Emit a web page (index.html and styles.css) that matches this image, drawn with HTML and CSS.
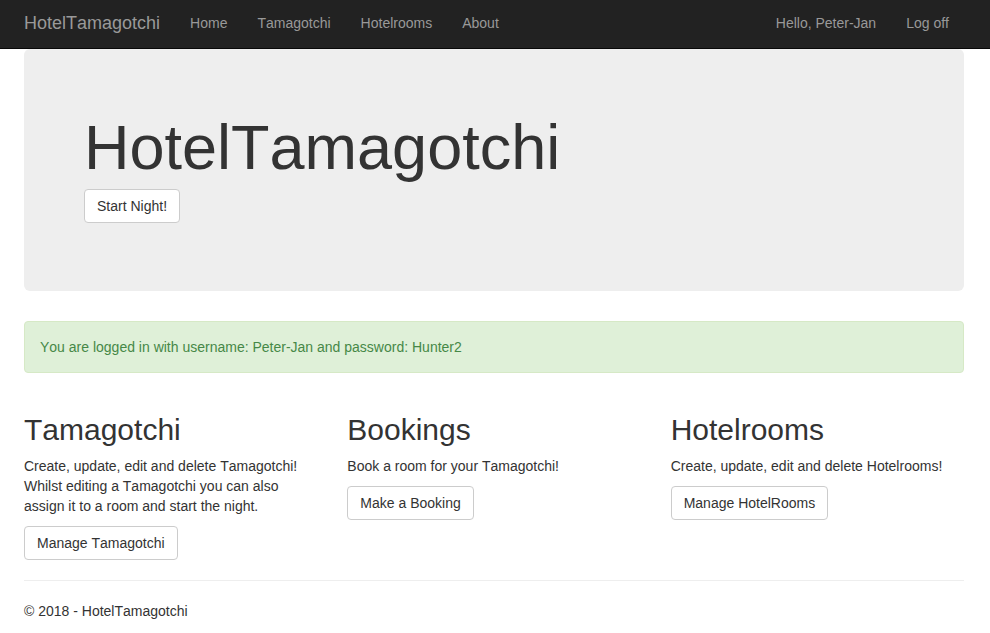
FILE: index.html
```html
<!DOCTYPE html>
<html lang="en">
<head>
<meta charset="utf-8">
<title>HotelTamagotchi</title>
<link rel="stylesheet" href="styles.css">
</head>
<body>
<header class="navbar">
  <nav class="container navbar-inner">
    <a class="brand" href="#">HotelTamagotchi</a>
    <ul class="nav">
      <li><a href="#">Home</a></li>
      <li><a href="#">Tamagotchi</a></li>
      <li><a href="#">Hotelrooms</a></li>
      <li><a href="#">About</a></li>
    </ul>
    <ul class="nav nav-right">
      <li><a href="#">Hello, Peter-Jan</a></li>
      <li><a href="#">Log off</a></li>
    </ul>
  </nav>
</header>
<main class="container">
  <section class="jumbotron">
    <h1>HotelTamagotchi</h1>
    <button class="btn" type="button">Start Night!</button>
  </section>
  <div class="alert" role="status">You are logged in with username: Peter-Jan and password: Hunter2</div>
  <div class="row">
    <section>
      <h2>Tamagotchi</h2>
      <p>Create, update, edit and delete Tamagotchi! Whilst editing a Tamagotchi you can also assign it to a room and start the night.</p>
      <a class="btn" href="#">Manage Tamagotchi</a>
    </section>
    <section>
      <h2>Bookings</h2>
      <p>Book a room for your Tamagotchi!</p>
      <a class="btn" href="#">Make a Booking</a>
    </section>
    <section>
      <h2>Hotelrooms</h2>
      <p>Create, update, edit and delete Hotelrooms!</p>
      <a class="btn" href="#">Manage HotelRooms</a>
    </section>
  </div>
  <hr>
  <footer>
    <p>© 2018 - HotelTamagotchi</p>
  </footer>
</main>
</body>
</html>
```
FILE: styles.css
```css
* {
  box-sizing: border-box;
}

body {
  margin: 0;
  background: #fff;
  color: #333;
  font-family: "Liberation Sans", Arial, sans-serif;
  font-size: 14px;
  font-kerning: none;
  line-height: 20px;
}

.container {
  max-width: 1170px;
  margin: 0 auto;
  padding: 0 26px 0 24px;
}

.navbar {
  background: #222;
  border-bottom: 1px solid #080808;
}

.navbar-inner {
  display: flex;
  align-items: center;
  height: 48px;
  padding-bottom: 2px;
}

.navbar a {
  color: #999;
  text-decoration: none;
}

.brand {
  margin-right: 15px;
  font-size: 18px;
}

.nav {
  display: flex;
  margin: 0;
  padding: 0;
  list-style: none;
}

.nav a {
  display: block;
  padding: 0 15px;
}

.nav-right {
  margin-left: auto;
}

.navbar a:hover {
  color: #fff;
}

.jumbotron {
  margin-bottom: 30px;
  padding: 64px 60px 68px;
  border-radius: 6px;
  background: #eee;
}

h1,
h2 {
  margin: 0;
  font-weight: 500;
}

h1 {
  margin-bottom: 7px;
  font-size: 63px;
  line-height: 69px;
}

.btn {
  display: inline-block;
  padding: 6px 12px;
  border: 1px solid #ccc;
  border-radius: 4px;
  background: #fff;
  color: #333;
  font: inherit;
  text-decoration: none;
  cursor: pointer;
}

.btn:hover {
  background: #e6e6e6;
}

.alert {
  margin-bottom: 40px;
  padding: 15px;
  border: 1px solid #d6e9c6;
  border-radius: 4px;
  background: #dff0d8;
  color: #468847;
}

.row {
  display: grid;
  grid-template-columns: repeat(3, 1fr);
  gap: 30px;
}

h2 {
  margin-bottom: 10px;
  font-size: 30px;
  line-height: 33px;
}

p {
  margin: 0 0 10px;
}

hr {
  margin: 20px 0;
  border: 0;
  border-top: 1px solid #eee;
}
```
